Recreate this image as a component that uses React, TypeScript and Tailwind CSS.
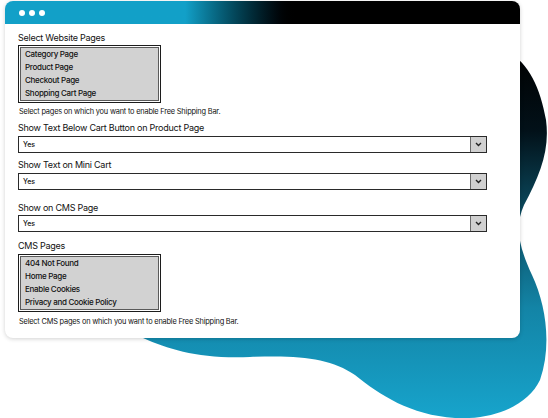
import React from "react";

const websitePages = ["Category Page", "Product Page", "Checkout Page", "Shopping Cart Page"];
const cmsPages = ["404 Not Found", "Home Page", "Enable Cookies", "Privacy and Cookie Policy"];

const font = { fontFamily: "Inter, 'Noto Sans', Arial, sans-serif" };

function Blob() {
  return (
    <svg
      className="absolute left-0 top-0"
      width="548"
      height="418"
      viewBox="0 0 548 418"
    >
      <defs>
        <linearGradient id="blobGrad" x1="0" y1="0" x2="0" y2="1">
          <stop offset="0" stopColor="#000000" />
          <stop offset="0.22" stopColor="#021119" />
          <stop offset="0.45" stopColor="#0b4d62" />
          <stop offset="0.7" stopColor="#1384a6" />
          <stop offset="1" stopColor="#17a4cc" />
        </linearGradient>
      </defs>
      <path
        d="M500 50 C525 55 540 85 546 120 C550 150 540 175 524 205 C515 225 518 245 532 275 C546 305 552 345 540 380 C528 405 495 420 455 418 C410 415 380 395 355 375 C330 358 300 355 250 357 C200 359 170 350 143 338 L120 338 L300 200 Z"
        fill="url(#blobGrad)"
      />
    </svg>
  );
}

function MultiSelect({ options }: { options: string[] }) {
  return (
    <div className="w-[143px] border border-[#1c1c1c] bg-white p-px">
      <div className="border border-[#5a5a5a] bg-[#d2d2d2] px-[4px]">
        {options.map((o) => (
          <div key={o} className="h-[13px] text-[8px] font-medium leading-[13px] text-[#111] tracking-[-0.3px]">
            {o}
          </div>
        ))}
      </div>
    </div>
  );
}

function Select({ value }: { value: string }) {
  return (
    <div className="flex h-[17px] w-[469px] border border-[#2a2a2a] bg-white">
      <div className="flex-1 pl-[4px] text-[7px] font-medium leading-[15px] text-[#111]">{value}</div>
      <div className="flex w-[16px] items-center justify-center border-l border-[#6a6a6a] bg-[#d0d0d0]">
        <svg width="7" height="5" viewBox="0 0 7 5">
          <path d="M1 1 L3.5 3.5 L6 1" stroke="#222" strokeWidth="1.4" fill="none" />
        </svg>
      </div>
    </div>
  );
}

function Label({ children, className = "" }: { children: React.ReactNode; className?: string }) {
  return (
    <div className={`h-[13px] text-[9px] leading-[13px] text-[#111] tracking-[-0.25px] ${className}`}>
      {children}
    </div>
  );
}

function Help({ children, className = "" }: { children: React.ReactNode; className?: string }) {
  return (
    <div className={`h-[11px] pl-px text-[7.4px] leading-[11px] text-[#111] tracking-[-0.2px] ${className}`}>
      {children}
    </div>
  );
}

export default function App() {
  return (
    <div className="relative h-[418px] w-[548px] overflow-hidden bg-white" style={font}>
      <Blob />
      <div className="relative ml-[5px] mt-px h-[337px] w-[515px] overflow-hidden rounded-[8px] bg-white shadow-[0_1px_4px_rgba(0,0,0,0.18)]">
        <div className="flex h-[23px] items-center gap-[4px] bg-gradient-to-r from-[#12a0c8] from-35% to-black to-57% pl-[14px]">
          <span className="h-[6px] w-[6px] rounded-full bg-white" />
          <span className="h-[6px] w-[6px] rounded-full bg-white" />
          <span className="h-[6px] w-[6px] rounded-full bg-white" />
        </div>
        <div className="pl-[13px] pt-[7px]">
          <Label>Select Website Pages</Label>
          <div className="mt-[1px]">
            <MultiSelect options={websitePages} />
          </div>
          <Help className="mt-[3px]">Select pages on which you want to enable Free Shipping Bar.</Help>
          <Label className="mt-[4px]">Show Text Below Cart Button on Product Page</Label>
          <div className="mt-[2px]">
            <Select value="Yes" />
          </div>
          <Label className="mt-[5px]">Show Text on Mini Cart</Label>
          <div className="mt-[2px]">
            <Select value="Yes" />
          </div>
          <Label className="mt-[11px]">Show on CMS Page</Label>
          <div className="mt-[1px]">
            <Select value="Yes" />
          </div>
          <Label className="mt-[7px]">CMS Pages</Label>
          <div className="mt-[2px]">
            <MultiSelect options={cmsPages} />
          </div>
          <Help className="mt-[4px]">Select CMS pages on which you want to enable Free Shipping Bar.</Help>
        </div>
      </div>
    </div>
  );
}
